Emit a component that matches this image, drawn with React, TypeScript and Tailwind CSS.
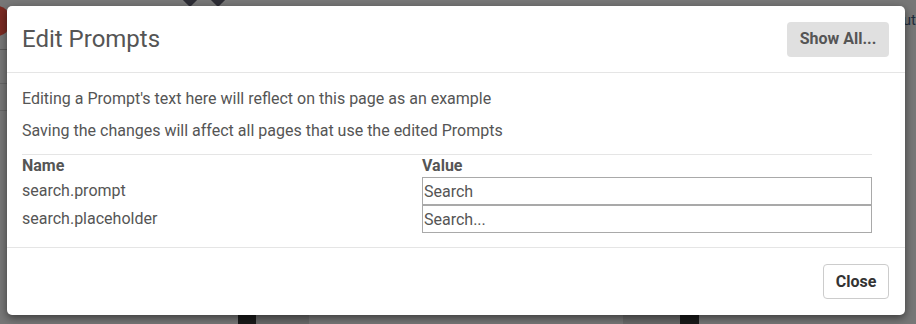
import React from "react";

const font = "Roboto, 'Liberation Sans', sans-serif";

function BackgroundPage() {
  return (
    <div className="flex flex-col justify-between h-full">
      <div className="flex items-start h-[120px]">
        <div className="flex flex-col w-[7px]">
          <div className="w-[26px] h-[30px] mt-[6px] ml-[-16px] rounded-full bg-[#7a2a22]" />
          <div className="mt-[13px] h-[1px] bg-[#5a5a5a]" />
          <div className="mt-[33px] h-[1px] bg-[#666666]" />
          <div className="mt-[26px] h-[1px] bg-[#666666]" />
        </div>
        <div className="flex gap-[18px] ml-[178px] mt-[-5px]">
          <div className="w-[10px] h-[10px] rotate-45 bg-[#2d2d35]" />
          <div className="w-[10px] h-[10px] rotate-45 bg-[#2d2d35]" />
        </div>
        <div className="flex-1" />
        <div className="mt-[13px] text-[15px] leading-none text-[#1f2d3d]">ut</div>
      </div>
      <div className="flex h-[9px]">
        <div className="ml-[238px] w-[18px] bg-[#1a1a1a]" />
        <div className="w-[53px] bg-[#6a6a6a]" />
        <div className="w-[314px]" />
        <div className="w-[57px] bg-[#6a6a6a]" />
        <div className="w-[19px] bg-[#1a1a1a]" />
      </div>
    </div>
  );
}

export default function App() {
  const rows = [
    { name: "search.prompt", value: "Search" },
    { name: "search.placeholder", value: "Search..." },
  ];
  return (
    <div
      className="relative w-[916px] h-[324px] overflow-hidden bg-[#777777]"
      style={{ fontFamily: font }}
    >
      <BackgroundPage />

      <div className="absolute left-[7px] top-[6px] w-[898px] h-[309px] bg-white rounded-[5px] shadow-[0_3px_9px_rgba(0,0,0,0.5)] flex flex-col">
        <div className="h-[67px] flex items-center justify-between pl-[15px] pr-[16px] border-b border-[#e5e5e5]">
          <h4 className="text-[24px] leading-[28px] text-[#555555] font-normal">Edit Prompts</h4>
          <button className="h-[35px] w-[102px] rounded-[4px] bg-[#e0e0e0] text-[16px] font-bold text-[#555555]">
            Show All...
          </button>
        </div>
        <div className="px-[15px] pt-[15px] pb-[14px] border-b border-[#e5e5e5] text-[16px] text-[#555555]">
          <p className="leading-[22px] mb-[10px]">Editing a Prompt's text here will reflect on this page as an example</p>
          <p className="leading-[22px] mb-[12px]">Saving the changes will affect all pages that use the edited Prompts</p>
          <div className="w-[850px] border-t border-[#e5e5e5]">
            <div className="grid grid-cols-[400px_450px] font-bold leading-[22px]">
              <div>Name</div>
              <div>Value</div>
            </div>
            {rows.map((r) => (
              <div key={r.name} className="grid grid-cols-[400px_450px] items-center">
                <div className="leading-[28px]">{r.name}</div>
                <input
                  readOnly
                  value={r.value}
                  className="h-[28px] w-[450px] border border-[#a9a9a9] px-[1px] text-[16px] text-[#555555] outline-none"
                  style={{ fontFamily: font }}
                />
              </div>
            ))}
          </div>
        </div>
        <div className="flex-1 flex items-center justify-end pr-[16px]">
          <button className="h-[35px] w-[66px] rounded-[4px] bg-white border border-[#cccccc] text-[16px] font-bold text-[#333333]">
            Close
          </button>
        </div>
      </div>
    </div>
  );
}
